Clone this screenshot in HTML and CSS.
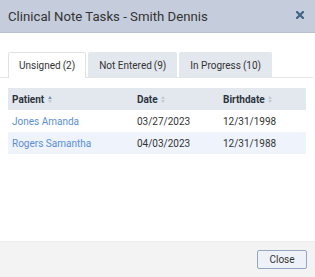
FILE: index.html
```html
<!DOCTYPE html>
<html>
<head>
<meta charset="utf-8">
<link rel="stylesheet" href="styles.css">
</head>
<body>
<div class="dialog">
  <div class="header">
    <div class="title">Clinical Note Tasks - Smith Dennis</div>
    <svg class="close-x" width="8" height="8" viewBox="0 0 8 8"><path d="M1 1L7 7M7 1L1 7" stroke="#3f6488" stroke-width="2.2" stroke-linecap="square"/></svg>
  </div>
  <div class="body">
    <div class="tabs">
      <div class="tab active">Unsigned <span class="count">(2)</span></div>
      <div class="tab">Not Entered <span class="count">(9)</span></div>
      <div class="tab">In Progress <span class="count">(10)</span></div>
    </div>
    <table class="grid">
      <thead>
        <tr>
          <th class="c1">Patient <span class="sort up"></span></th>
          <th class="c2">Date <span class="sort"></span></th>
          <th class="c3">Birthdate <span class="sort"></span></th>
        </tr>
      </thead>
      <tbody>
        <tr><td><a class="link">Jones Amanda</a></td><td>03/27/2023</td><td>12/31/1998</td></tr>
        <tr class="alt"><td><a class="link">Rogers Samantha</a></td><td>04/03/2023</td><td>12/31/1988</td></tr>
      </tbody>
    </table>
  </div>
  <div class="footer">
    <button class="btn">Close</button>
  </div>
</div>
</body>
</html>
```

FILE: styles.css
```css
html, body {
  margin: 0;
  padding: 0;
  background: #fff;
}
body {
  font-family: Roboto, "Liberation Sans", sans-serif;
  width: 315px;
  height: 277px;
  overflow: hidden;
}
.dialog {
  display: flex;
  flex-direction: column;
  height: 277px;
}
.header {
  height: 33px;
  background: #c5cddc;
  border-bottom: 1px solid #b8c1d1;
  display: flex;
  align-items: center;
  justify-content: space-between;
  padding: 0 11px 0 8px;
  box-sizing: border-box;
}
.title {
  font-size: 13.2px;
  color: #333;
}
.close-x {
  display: block;
  margin-top: -2px;
}
.body {
  flex: 1;
  padding-top: 19px;
}
.tabs {
  display: flex;
  gap: 2px;
  padding-left: 8px;
  border-bottom: 1px solid #e2e4e8;
  margin-right: 2px;
  height: 25px;
  align-items: flex-end;
}
.tab {
  height: 25px;
  box-sizing: border-box;
  padding: 0 10px;
  font-size: 10px;
  color: #333;
  background: #e3e7ee;
  display: flex;
  align-items: center;
  border: 1px solid #e3e7ee;
  border-bottom: none;
  border-radius: 2px 2px 0 0;
}
.tab .count {
  margin-left: 2px;
}
.tab.active {
  background: #fff;
  border-color: #dfe2e7;
  height: 26px;
  margin-bottom: -1px;
}
.grid {
  margin: 10px 0 0 8px;
  width: 298px;
  border-collapse: collapse;
  font-size: 10px;
  color: #333;
}
.grid th {
  background: #e3e7ee;
  text-align: left;
  font-weight: bold;
  height: 22px;
  padding: 0 4px;
  color: #2d3440;
}
.grid td {
  height: 22px;
  padding: 0 4px;
}
.grid .c1 { width: 117px; }
.grid .c2 { width: 78px; }
.grid tr.alt td { background: #eef3fc; }
.link {
  color: #5b8fd6;
}
.sort {
  display: inline-block;
  width: 5px;
  height: 7px;
  vertical-align: middle;
  position: relative;
  margin-left: 1px;
}
.sort::before, .sort::after {
  content: "";
  position: absolute;
  left: 0;
  border-left: 2.5px solid transparent;
  border-right: 2.5px solid transparent;
}
.sort::before {
  top: 0;
  border-bottom: 3px solid #c4cad3;
}
.sort::after {
  bottom: 0;
  border-top: 3px solid #c4cad3;
}
.sort.up::before { border-bottom-color: #7f95b0; }
.footer {
  height: 35px;
  background: #f3f3f3;
  border-top: 1px solid #ececec;
  display: flex;
  align-items: center;
  justify-content: flex-end;
  padding-right: 8px;
}
.btn {
  width: 50px;
  height: 19px;
  box-sizing: border-box;
  background: #eef2f8;
  border: 1px solid #93a7c2;
  border-radius: 2px;
  font-family: Roboto, "Liberation Sans", sans-serif;
  font-size: 10px;
  color: #333;
  padding: 0;
  margin-top: -1px;
}
```
